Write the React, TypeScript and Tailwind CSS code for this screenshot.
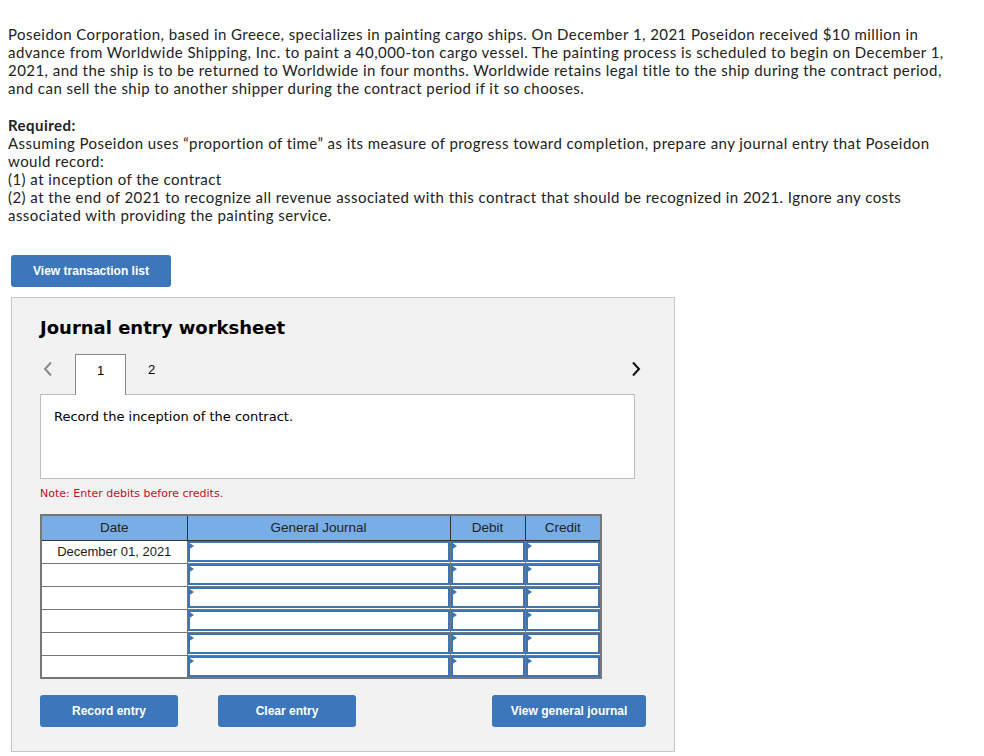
import React from "react"

const rows = ["December 01, 2021", "", "", "", "", ""]

function InputCell({ w }: { w: string }) {
  return (
    <td className={`${w} h-[23px] p-0 border border-[#777] bg-white`}>
      <div className="relative h-[21px] border-2 border-[#3c74b8]">
        <span className="absolute -left-[2px] -top-[1px] w-0 h-0 border-y-[4px] border-y-transparent border-l-[6px] border-l-[#3c74b8]" />
      </div>
    </td>
  )
}

function BlueButton({ children, className }: { children: React.ReactNode; className: string }) {
  return (
    <button
      className={`${className} h-[32px] rounded-[3px] bg-[#3b77ba] text-white text-[12px] font-bold font-['Liberation_Sans',Arial,sans-serif]`}
    >
      {children}
    </button>
  )
}

export default function App() {
  return (
    <div className="min-h-screen bg-white text-[#222] pt-[25px] font-['Lato','Liberation_Sans',sans-serif] text-[15px] leading-[18px] tracking-[0.45px]">
      <div className="pl-[8px] w-[958px]">
        <p>
          Poseidon Corporation, based in Greece, specializes in painting cargo ships. On December 1, 2021 Poseidon
          received $10 million in advance from Worldwide Shipping, Inc. to paint a 40,000-ton cargo vessel. The painting
          process is scheduled to begin on December 1, 2021, and the ship is to be returned to Worldwide in four months.
          Worldwide retains legal title to the ship during the contract period, and can sell the ship to another shipper
          during the contract period if it so chooses.
        </p>
        <p className="mt-[19px]">
          <strong>Required:</strong>
          <br />
          Assuming Poseidon uses “proportion of time” as its measure of progress toward completion, prepare any journal
          entry that Poseidon would record:
          <br />
          (1) at inception of the contract
          <br />
          (2) at the end of 2021 to recognize all revenue associated with this contract that should be recognized in
          2021. Ignore any costs associated with providing the painting service.
        </p>
      </div>

      <div className="pl-[11px] mt-[31px] tracking-normal">
        <BlueButton className="w-[160px]">View transaction list</BlueButton>

        <div className="mt-[10px] w-[664px] h-[455px] bg-[#f2f2f2] border border-[#c6c6c6] pl-[28px] pt-[19px] font-['DejaVu_Sans',Verdana,sans-serif] text-black">
          <h2 className="text-[18px] leading-[22px] font-bold">Journal entry worksheet</h2>

          <div className="mt-[15px] flex items-end w-[601px]">
            <div className="w-[35px] h-[40px] flex items-center pl-[3px] pb-[10px]">
              <svg width="10" height="16" viewBox="0 0 10 16">
                <path d="M8 1.5 L2 8 L8 14.5" fill="none" stroke="#8a8a8a" strokeWidth="2" />
              </svg>
            </div>
            <div className="relative z-10 -mb-px w-[51px] h-[41px] bg-white border border-b-0 border-[#888] flex items-center justify-center pb-[8px] font-['Liberation_Sans',Arial,sans-serif] text-[13px]">
              1
            </div>
            <div className="w-[51px] h-[40px] flex items-center justify-center pb-[8px] font-['Liberation_Sans',Arial,sans-serif] text-[13px]">
              2
            </div>
            <div className="flex-1 h-[40px] flex items-center justify-end pb-[10px]">
              <svg width="10" height="16" viewBox="0 0 10 16">
                <path d="M2 1.5 L8 8 L2 14.5" fill="none" stroke="#111" strokeWidth="2" />
              </svg>
            </div>
          </div>

          <div className="w-[595px] h-[85px] bg-white border border-[#bdbdbd] pl-[13px] pt-[14px] text-[13px] leading-[16px]">
            Record the inception of the contract.
          </div>

          <p className="mt-[8px] text-[11px] leading-[14px] text-[#c0102a]">Note: Enter debits before credits.</p>

          <table className="mt-[13px] border-collapse border-2 border-[#777] font-['Liberation_Sans',Arial,sans-serif] text-[13px] text-[#1c1c1c]">
            <thead>
              <tr className="bg-[#79ade5] h-[25px] text-[13.5px] text-[#222]">
                <th className="w-[146px] border border-[#333] font-normal">Date</th>
                <th className="w-[263px] border border-[#333] font-normal">General Journal</th>
                <th className="w-[75px] border border-[#333] font-normal">Debit</th>
                <th className="w-[76px] border border-[#333] font-normal">Credit</th>
              </tr>
            </thead>
            <tbody>
              {rows.map((d, i) => (
                <tr key={i}>
                  <td className="w-[146px] h-[23px] p-0 border border-[#777] bg-white text-center">{d}</td>
                  <InputCell w="w-[263px]" />
                  <InputCell w="w-[75px]" />
                  <InputCell w="w-[76px]" />
                </tr>
              ))}
            </tbody>
          </table>

          <div className="mt-[16px] flex w-[606px]">
            <BlueButton className="w-[138px]">Record entry</BlueButton>
            <BlueButton className="w-[138px] ml-[40px]">Clear entry</BlueButton>
            <BlueButton className="w-[154px] ml-auto">View general journal</BlueButton>
          </div>
        </div>
      </div>
    </div>
  )
}
